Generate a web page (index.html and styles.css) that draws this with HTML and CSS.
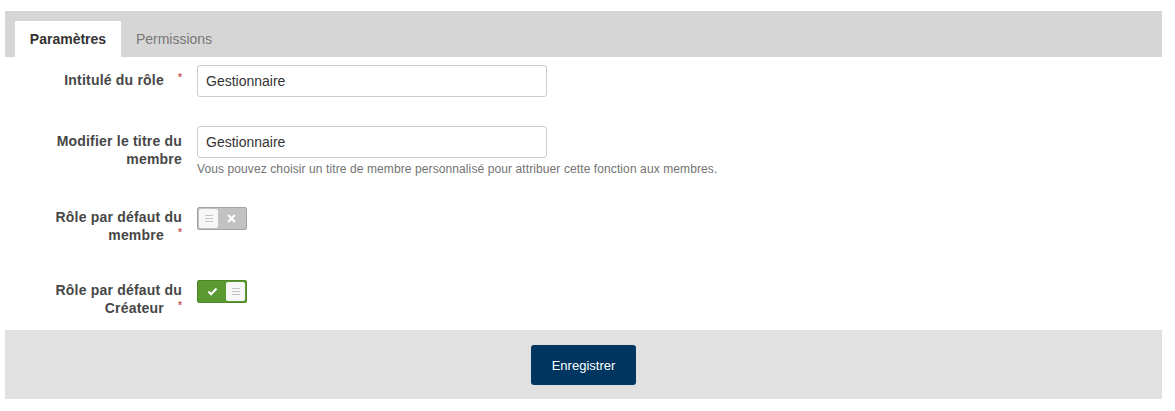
FILE: index.html
```html
<!DOCTYPE html>
<html lang="fr">
<head>
    <meta charset="UTF-8">
    <title>Rôle</title>
    <link rel="stylesheet" href="styles.css">
</head>
<body>
<div class="page">
    <div class="tabs">
        <div class="tab active">Paramètres</div>
        <div class="tab">Permissions</div>
    </div>
    <form class="form">
        <div class="field">
            <label class="label">Intitulé du rôle<span class="req">*</span></label>
            <div class="control">
                <input type="text" class="input" value="Gestionnaire">
            </div>
        </div>
        <div class="field">
            <label class="label">Modifier le titre du membre</label>
            <div class="control">
                <input type="text" class="input" value="Gestionnaire">
                <div class="help">Vous pouvez choisir un titre de membre personnalisé pour attribuer cette fonction aux membres.</div>
            </div>
        </div>
        <div class="field field-switch">
            <label class="label">Rôle par défaut du membre<span class="req">*</span></label>
            <div class="control">
                <div class="switch">
                    <span class="handle"><i></i></span>
                    <span class="icon">
                        <svg width="9" height="9" viewBox="0 0 10 10"><path d="M2 2L8 8M8 2L2 8" stroke="#fff" stroke-width="2.4" stroke-linecap="square"/></svg>
                    </span>
                </div>
            </div>
        </div>
        <div class="field field-switch last">
            <label class="label">Rôle par défaut du Créateur<span class="req">*</span></label>
            <div class="control">
                <div class="switch on">
                    <span class="icon">
                        <svg width="11" height="9" viewBox="0 0 12 10"><path d="M1.5 5L4.5 8L10.5 1.8" fill="none" stroke="#fff" stroke-width="2.4"/></svg>
                    </span>
                    <span class="handle"><i></i></span>
                </div>
            </div>
        </div>
    </form>
    <div class="footer">
        <button type="button" class="btn">Enregistrer</button>
    </div>
</div>
</body>
</html>
```

FILE: styles.css
```css
body {
    margin: 0;
    background: #fff;
    font-family: "Liberation Sans", Arial, sans-serif;
    color: #333;
}
.page {
    margin: 11px 13px 0 5px;
}
.tabs {
    display: flex;
    background: #d6d6d6;
    padding: 10px 10px 0;
    height: 36px;
}
.tab {
    width: 106px;
    height: 36px;
    line-height: 36px;
    text-align: center;
    font-size: 14px;
    color: #777;
}
.tab.active {
    background: #fff;
    color: #333;
    font-weight: bold;
}
.form {
    padding: 8px 0 13px;
}
.field {
    display: flex;
    gap: 15px;
    margin-bottom: 29px;
}
.field-switch {
    margin-bottom: 36px;
}
.field.last {
    margin-bottom: 0;
}
.label {
    width: 177px;
    flex-shrink: 0;
    box-sizing: border-box;
    padding: 6px 0 0 20px;
    text-align: right;
    font-size: 14px;
    font-weight: bold;
    letter-spacing: 0.2px;
    line-height: 18px;
    color: #474747;
}
.field-switch .label {
    padding-top: 1px;
}
.req {
    display: inline-block;
    vertical-align: top;
    margin-left: 14px;
    padding-top: 2px;
    color: #c55a5a;
    font-size: 10px;
    line-height: 10px;
}
.input {
    display: block;
    width: 350px;
    height: 32px;
    box-sizing: border-box;
    margin: 0;
    padding: 0 8px;
    border: 1px solid #ccc;
    border-radius: 3px;
    font-family: inherit;
    font-size: 14px;
    color: #333;
}
.help {
    margin-top: 3px;
    font-size: 12px;
    letter-spacing: 0.1px;
    line-height: 17px;
    color: #737373;
}
.switch {
    display: flex;
    align-items: center;
    justify-content: space-between;
    width: 50px;
    height: 23px;
    box-sizing: border-box;
    padding: 1px;
    border: 1px solid #a3a3a3;
    border-radius: 2px;
    background: #c2c2c2;
}
.switch.on {
    background: #5b9a31;
    border-color: #4d8528;
}
.handle {
    display: flex;
    align-items: center;
    justify-content: center;
    width: 19px;
    height: 19px;
    background: #f7f7f7;
    border-radius: 2px;
}
.handle i {
    display: block;
    width: 8px;
    height: 1px;
    background: #c4c4c4;
    box-shadow: 0 3px 0 #c4c4c4, 0 -3px 0 #c4c4c4;
}
.icon {
    display: flex;
    align-items: center;
    justify-content: center;
    flex: 1;
    height: 19px;
}
.footer {
    display: flex;
    justify-content: center;
    background: #e1e1e1;
    padding: 15px 0 14px;
}
.btn {
    width: 105px;
    height: 40px;
    border: none;
    border-radius: 3px;
    background: #003660;
    color: #fff;
    font-family: inherit;
    font-size: 13px;
    cursor: pointer;
}
```
